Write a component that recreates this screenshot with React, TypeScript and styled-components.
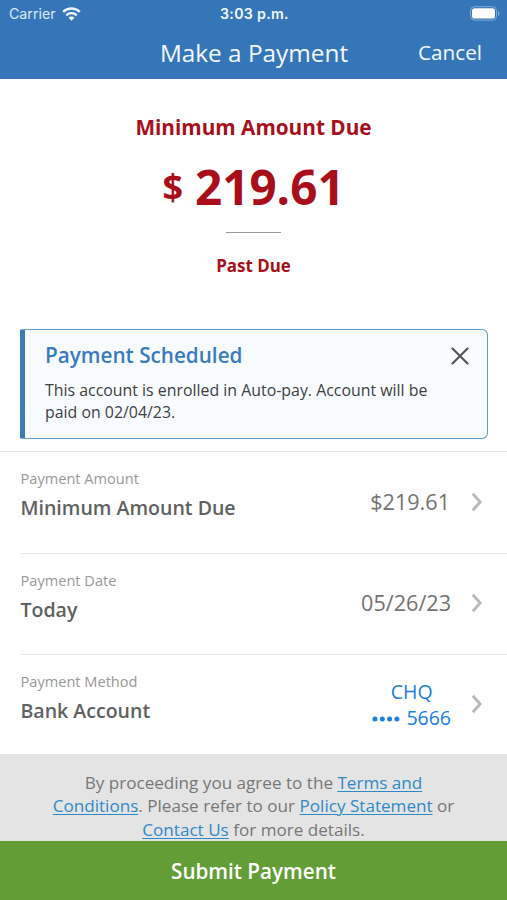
import React from "react";
import styled, { createGlobalStyle } from "styled-components";

const Global = createGlobalStyle`
  * { box-sizing: border-box; }
  body { margin: 0; background: #fff; }
  h1, h2, p { margin: 0; }
  button { border: 0; padding: 0; background: none; font: inherit; color: inherit; cursor: pointer; }
`;

const Screen = styled.div`
  width: 507px;
  height: 900px;
  display: flex;
  flex-direction: column;
  overflow: hidden;
  background: #fff;
  font-family: "Open Sans", "Noto Sans", sans-serif;
`;

const Header = styled.header`
  height: 79px;
  flex: none;
  background: #3576b9;
  color: #f3f8ff;
`;

const StatusBar = styled.div`
  height: 28px;
  display: grid;
  grid-template-columns: 1fr auto 1fr;
  align-items: center;
  padding: 0 7px 0 9px;
  font-family: Inter, sans-serif;
  font-size: 14.2px;
  line-height: 28px;
`;

const Carrier = styled.span`
  display: flex;
  align-items: center;
  gap: 6px;
  color: #dce9f8;
`;

const Clock = styled.span`
  font-weight: 600;
  letter-spacing: 0.3px;
`;

const Battery = styled.svg`
  justify-self: end;
  margin-top: -1px;
`;

const NavBar = styled.div`
  height: 51px;
  display: grid;
  grid-template-columns: 1fr auto 1fr;
  padding: 0 25px 0 26px;
`;

const NavTitle = styled.h1`
  grid-column: 2;
  font-weight: 400;
  font-size: 24.35px;
  line-height: 50px;
`;

const Cancel = styled.button`
  justify-self: end;
  && { font-size: 20.7px; line-height: 49px; }
  height: 49px;
`;

const Summary = styled.section`
  height: 250px;
  flex: none;
  display: flex;
  flex-direction: column;
  align-items: center;
  padding-top: 33px;
  color: #a80f1b;
  font-weight: 700;
`;

const DueLabel = styled.h2`
  font-size: 20.75px;
  line-height: 30px;
`;

const Amount = styled.div`
  display: flex;
  gap: 12px;
  height: 90px;
  font-size: 47.6px;
  line-height: 90px;
`;

const Currency = styled.span`
  font-size: 36px;
  line-height: 89px;
`;

const ShortRule = styled.div`
  width: 55px;
  height: 1px;
  background: #999;
`;

const Status = styled.p`
  margin-top: 20px;
  font-size: 16.9px;
  line-height: 25px;
`;

const Notice = styled.section`
  flex: none;
  display: grid;
  grid-template-columns: 1fr auto;
  width: 468px;
  height: 110px;
  margin: 0 0 12px 20px;
  padding: 12px 18px 0 20px;
  border: 1px solid #5f9dd0;
  border-left: 5px solid #3880bd;
  border-radius: 2px 6px 6px 2px;
  background: #f8fcff;
  align-content: start;
  row-gap: 11px;
`;

const NoticeTitle = styled.h2`
  color: #397bc1;
  font-size: 20.7px;
  line-height: 27px;
  font-weight: 600;
`;

const NoticeText = styled.p`
  grid-column: 1 / -1;
  color: #3e4042;
  font-size: 15.9px;
  line-height: 21.6px;
`;

const CloseButton = styled.button`
  width: 18px;
  height: 27px;
  display: grid;
  place-items: center;
`;

const Details = styled.main`
  height: 303px;
  flex: none;
  border-top: 1px solid #e8e8e8;
`;

const Row = styled.div`
  height: 101.2px;
  display: flex;
  justify-content: space-between;
  margin-left: 20px;
  padding-right: 24px;
  & + & { border-top: 1.5px solid #e9e9e9; }
`;

const Field = styled.div`
  padding: 15px 0 0 0.5px;
`;

const FieldLabel = styled.div`
  color: #999;
  font-size: 14.6px;
  line-height: 22px;
`;

const FieldName = styled.div`
  color: #606161;
  font-size: 19.55px;
  line-height: 37px;
  font-weight: 600;
`;

const FieldValue = styled.button`
  display: flex;
  align-items: center;
  gap: 20px;
  padding-bottom: 2px;
`;

const Value = styled.span<{ $inset?: number }>`
  color: #737373;
  font-size: 21.6px;
  line-height: 30px;
  margin-right: ${(p) => p.$inset ?? 0}px;
`;

const Account = styled.span`
  color: #1981e2;
  font-size: 19.5px;
  line-height: 26.7px;
  padding-top: 2px;
  text-align: center;
`;

const AccountNumber = styled.span`
  display: flex;
  align-items: center;
  gap: 6px;
`;

const Terms = styled.footer`
  height: 87px;
  flex: none;
  padding: 17px 40px 0;
  background: #e4e4e4;
  color: #777;
  text-align: center;
  font-size: 17.1px;
  line-height: 23.3px;
`;

const Line = styled.div`
  white-space: nowrap;
`;

const Link = styled.a`
  color: #2c89ca;
  text-decoration: underline;
  text-decoration-thickness: 1.4px;
  text-underline-offset: 2px;
`;

const Submit = styled.button`
  flex: none;
  width: 100%;
  height: 59px;
  && {
    background: #629d35;
    color: #fff;
    font-size: 20.65px;
    font-weight: 600;
    line-height: 60px;
  }
`;

const Wifi = () => (
  <svg width="19" height="15" viewBox="0 0 19 15" fill="none" stroke="#f3f8ff" strokeWidth="2.4">
    <path d="M1.2 4.8a12 12 0 0 1 16.6 0" />
    <path d="M4.2 8.3a7.6 7.6 0 0 1 10.6 0" />
    <path d="M9.5 13.7 6.6 10.8a4 4 0 0 1 5.8 0z" fill="#f3f8ff" stroke="none" />
  </svg>
);

const Chevron = () => (
  <svg width="12" height="20" viewBox="0 0 12 20" fill="none" stroke="#b9b9b9" strokeWidth="2.8">
    <path d="M1.8 1.8 9.2 10 1.8 18.2" />
  </svg>
);

const Dots = () => (
  <svg width="28" height="6" viewBox="0 0 28 6" fill="#1981e2">
    <circle cx="3" cy="3" r="2.5" />
    <circle cx="10.3" cy="3" r="2.5" />
    <circle cx="17.6" cy="3" r="2.5" />
    <circle cx="24.9" cy="3" r="2.5" />
  </svg>
);

interface DetailRowProps {
  label: string;
  name: string;
  children: React.ReactNode;
}

const DetailRow = ({ label, name, children }: DetailRowProps) => (
  <Row>
    <Field>
      <FieldLabel>{label}</FieldLabel>
      <FieldName>{name}</FieldName>
    </Field>
    <FieldValue>
      {children}
      <Chevron />
    </FieldValue>
  </Row>
);

export default function App() {
  return (
    <>
      <Global />
      <Screen>
        <Header>
          <StatusBar>
            <Carrier>
              Carrier
              <Wifi />
            </Carrier>
            <Clock>3:03 p.m.</Clock>
            <Battery width="30" height="15" viewBox="0 0 30 15">
              <rect x="0.5" y="0.7" width="26" height="13.4" rx="4" fill="none" stroke="#82acd8" />
              <rect x="2" y="2.2" width="23" height="10.4" rx="2.6" fill="#fff" />
              <path d="M28 5v5q1.6-.7 1.6-2.5T28 5z" fill="#82acd8" />
            </Battery>
          </StatusBar>
          <NavBar>
            <NavTitle>Make a Payment</NavTitle>
            <Cancel>Cancel</Cancel>
          </NavBar>
        </Header>

        <Summary>
          <DueLabel>Minimum Amount Due</DueLabel>
          <Amount>
            <Currency>$</Currency>
            <span>219.61</span>
          </Amount>
          <ShortRule />
          <Status>Past Due</Status>
        </Summary>

        <Notice>
          <NoticeTitle>Payment Scheduled</NoticeTitle>
          <CloseButton aria-label="Close">
            <svg width="18" height="18" viewBox="0 0 18 18" stroke="#555" strokeWidth="2.2" strokeLinecap="round">
              <path d="M1.5 1.5l15 15M16.5 1.5l-15 15" />
            </svg>
          </CloseButton>
          <NoticeText>
            This account is enrolled in Auto-pay. Account will be
            <br />
            paid on 02/04/23.
          </NoticeText>
        </Notice>

        <Details>
          <DetailRow label="Payment Amount" name="Minimum Amount Due">
            <Value $inset={1}>$219.61</Value>
          </DetailRow>
          <DetailRow label="Payment Date" name="Today">
            <Value>05/26/23</Value>
          </DetailRow>
          <DetailRow label="Payment Method" name="Bank Account">
            <Account>
              CHQ
              <AccountNumber>
                <Dots />
                5666
              </AccountNumber>
            </Account>
          </DetailRow>
        </Details>

        <Terms>
          <Line>
            By proceeding you agree to the <Link>Terms and</Link>
          </Line>
          <Line>
            <Link>Conditions</Link>. Please refer to our <Link>Policy Statement</Link> or
          </Line>
          <Line>
            <Link>Contact Us</Link> for more details.
          </Line>
        </Terms>
        <Submit>Submit Payment</Submit>
      </Screen>
    </>
  );
}
